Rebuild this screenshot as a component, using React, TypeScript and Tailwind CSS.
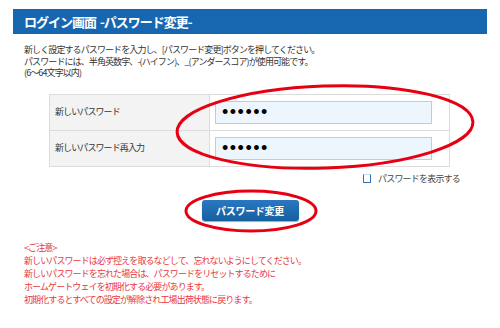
const jp = "font-['Noto_Sans_CJK_JP','Noto_Sans',sans-serif]";

const notes = [
  "<ご注意>",
  "新しいパスワードは必ず控えを取るなどして、忘れないようにしてください。",
  "新しいパスワードを忘れた場合は、パスワードをリセットするために",
  "ホームゲートウェイを初期化する必要があります。",
  "初期化するとすべての設定が解除され工場出荷状態に戻ります。",
];

function PasswordRow({ label, last }: { label: string; last?: boolean }) {
  return (
    <div className={`flex ${last ? "h-[35px]" : "h-[36px] border-b border-[#dcdcdc]"}`}>
      <div className="w-[160px] shrink-0 bg-[#f3f3f3] border-r border-[#dcdcdc] flex items-center pl-[5px] text-[9px] tracking-[-0.9px] text-[#333]">
        {label}
      </div>
      <div className="flex-1 bg-white flex items-center pl-[5px]">
        <input
          type="password"
          readOnly
          defaultValue="abcdef"
          className="w-[217px] h-[23px] bg-[#eef6fd] border border-[#a6d4f2] pl-[6px] text-[18px] tracking-[1.5px] text-black outline-none font-['Liberation_Sans',sans-serif]"
        />
      </div>
    </div>
  );
}

export default function App() {
  return (
    <div className={`relative w-[500px] h-[328px] bg-white overflow-hidden ${jp}`}>
      <div className="mx-[13px] mt-[9px] h-[25px] bg-[#1767b0] flex items-center px-[11px]">
        <span className="text-white font-bold text-[13px] tracking-[-1px]">ログイン画面&nbsp;&nbsp;-パスワード変更-</span>
      </div>

      <div className="mt-[10px] pl-[24px] text-[9px] leading-[11.5px] tracking-[-0.9px] text-[#333]">
        <p>新しく設定するパスワードを入力し、[パスワード変更]ボタンを押してください。</p>
        <p>パスワードには、半角英数字、-(ハイフン)、_(アンダースコア)が使用可能です。</p>
        <p>(6〜64文字以内)</p>
      </div>

      <div className="ml-[49px] mt-[15px] w-[401px] border border-[#dcdcdc]">
        <PasswordRow label="新しいパスワード" />
        <PasswordRow label="新しいパスワード再入力" last />
      </div>

      <label className="mt-[7px] ml-[363px] flex items-center gap-[7px] h-[10px]">
        <span className="w-[8px] h-[9px] border border-[#2f6fb5] border-t-[#c9dcf0] rounded-b-[1px] bg-white" />
        <span className="text-[9px] tracking-[-0.8px] text-[#444]">パスワードを表示する</span>
      </label>

      <div className="mt-[16px] flex justify-center">
        <button className="w-[97px] h-[21px] rounded-[3px] bg-gradient-to-b from-[#2a78c0] to-[#14609f] shadow-[0_1px_1px_rgba(0,0,0,0.35)] text-white font-bold text-[10px] tracking-[-0.3px]">
          パスワード変更
        </button>
      </div>

      <div className="mt-[20px] pl-[24px] text-[9px] leading-[13px] tracking-[-0.9px] text-[#e8383d]">
        {notes.map((n) => (
          <p key={n}>{n}</p>
        ))}
      </div>

      <svg className="absolute inset-0 pointer-events-none" width="500" height="328" viewBox="0 0 500 328">
        <ellipse cx="325" cy="127" rx="148" ry="41" fill="none" stroke="#e60012" strokeWidth="3" transform="rotate(-2 325 127)" />
        <ellipse cx="251" cy="211" rx="65" ry="20" fill="none" stroke="#e60012" strokeWidth="3" />
      </svg>
    </div>
  );
}
